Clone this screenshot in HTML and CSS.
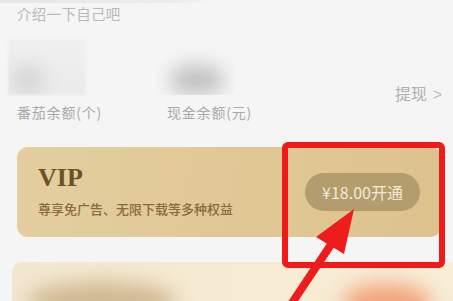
FILE: index.html
```html
<!DOCTYPE html>
<html lang="zh">
<head>
<meta charset="utf-8">
<link rel="stylesheet" href="styles.css">
</head>
<body>
<div class="page">
  <div class="topline"></div>
  <div class="intro">介绍一下自己吧</div>
  <div class="stats">
    <div class="stat stat-a">
      <div class="value value-a"><span class="blob blob-a"></span></div>
      <div class="label">番茄余额(个)</div>
    </div>
    <div class="stat stat-b">
      <div class="value value-b"><span class="blob blob-b"></span></div>
      <div class="label">现金余额(元)</div>
    </div>
    <div class="withdraw">提现 <span class="chev">&gt;</span></div>
  </div>
  <div class="vip">
    <div class="vip-text">
      <div class="vip-title">VIP</div>
      <div class="vip-sub">尊享免广告、无限下载等多种权益</div>
    </div>
    <div class="vip-btn">¥18.00开通</div>
  </div>
  <div class="promo">
    <span class="promo-blur promo-left"></span>
    <span class="promo-blur promo-right"></span>
  </div>

  <div class="highlight"></div>
  <svg class="arrow" width="453" height="301" viewBox="0 0 453 301">
    <line x1="290" y1="306" x2="334" y2="240" stroke="#ee1c1c" stroke-width="8" stroke-linecap="butt"/>
    <polygon points="354,209 316,237 344,254" fill="#ee1c1c"/>
  </svg>
</div>
</body>
</html>
```

FILE: styles.css
```css
html, body {
  margin: 0;
  padding: 0;
}
body {
  background: #f5f5f5;
  font-family: "Noto Sans CJK SC", "Noto Sans", sans-serif;
}
.page {
  position: relative;
  width: 453px;
  height: 301px;
  overflow: hidden;
  background: #f5f5f5;
}
.topline {
  height: 3px;
  width: 215px;
  background: linear-gradient(90deg, #e6e6e6, #ececec 80%, #f5f5f5);
}
.intro {
  padding: 2px 0 0 17px;
  font-size: 14.5px;
  line-height: 17px;
  letter-spacing: 0.3px;
  color: #b9b9b9;
}
.stats {
  display: flex;
  align-items: flex-start;
  padding: 16px 0 0 8px;
  height: 103px;
  box-sizing: border-box;
}
.stat {
  display: flex;
  flex-direction: column;
}
.stat-a {
  width: 147px;
}
.stat-b {
  width: 150px;
}
.value {
  position: relative;
  overflow: hidden;
  height: 57px;
}
.value-a {
  width: 78px;
  background: linear-gradient(180deg, #f0f0f0, #ebebeb);
  filter: blur(1px);
}
.value-b {
  width: 80px;
}
.blob {
  position: absolute;
  border-radius: 50%;
  filter: blur(9px);
}
.blob-a {
  left: 4px;
  top: 26px;
  width: 32px;
  height: 32px;
  background: #d6d6d6;
}
.blob-b {
  left: 14px;
  top: 26px;
  width: 56px;
  height: 32px;
  background: #c4c4c4;
}
.label {
  margin-top: 9px;
  padding-left: 9px;
  font-size: 14px;
  line-height: 16px;
  letter-spacing: 0.8px;
  color: #a9a9a9;
  white-space: nowrap;
}
.stat-b .label {
  padding-left: 12px;
}
.withdraw {
  margin-left: auto;
  margin-right: 11px;
  margin-top: 46px;
  font-size: 16px;
  line-height: 18px;
  color: #b0b0b0;
  white-space: nowrap;
}
.chev {
  font-family: "Liberation Sans", sans-serif;
  margin-left: 2px;
  color: #bdbdbd;
}
.vip {
  margin: 22px 12px 0 17px;
  height: 90px;
  border-radius: 11px;
  background: linear-gradient(100deg, #e4cea0 0%, #e0c794 60%, #ddc28e 100%);
  display: flex;
  align-items: center;
  padding: 0 21px 0 21px;
  box-sizing: border-box;
}
.vip-text {
  flex: 1;
}
.vip-title {
  font-family: "Liberation Serif", "DejaVu Serif", serif;
  font-weight: bold;
  font-size: 26px;
  line-height: 28px;
  color: #6d5128;
  margin-top: -4px;
}
.vip-sub {
  margin-top: 9px;
  font-size: 13px;
  font-weight: 500;
  line-height: 16px;
  color: #8a6b3b;
  white-space: nowrap;
}
.vip-btn {
  height: 38px;
  width: 115px;
  border-radius: 19px;
  background: #b39d6f;
  color: #f2e9d5;
  font-size: 16px;
  line-height: 38px;
  text-align: center;
  margin-top: 0;
}
.promo {
  position: relative;
  margin: 25px 0 0 12px;
  height: 40px;
  border-radius: 10px 0 0 0;
  background: linear-gradient(90deg, #f3e6cf, #f7ebd3 50%, #f8edd6);
  overflow: hidden;
}
.promo-blur {
  position: absolute;
  border-radius: 50%;
  filter: blur(10px);
}
.promo-left {
  left: 15px;
  top: 20px;
  width: 150px;
  height: 40px;
  background: #cfb892;
}
.promo-right {
  left: 330px;
  top: 22px;
  width: 90px;
  height: 40px;
  background: #f2a27a;
}
.highlight {
  position: absolute;
  left: 282px;
  top: 142px;
  width: 163px;
  height: 126px;
  box-sizing: border-box;
  border: 6px solid #f21919;
  border-radius: 6px;
}
.arrow {
  position: absolute;
  left: 0;
  top: 0;
}
```
